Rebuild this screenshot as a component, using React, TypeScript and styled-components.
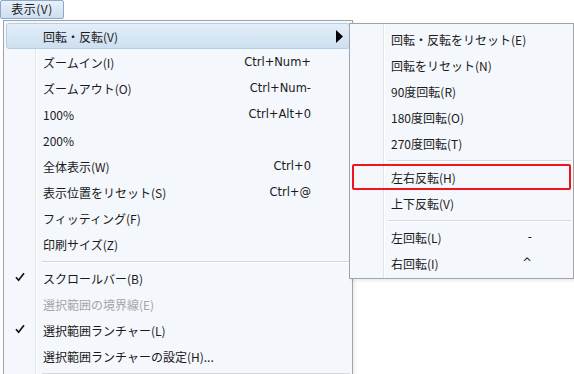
import React, { FC } from 'react';
import styled, { createGlobalStyle, css } from 'styled-components';

const GlobalStyle = createGlobalStyle`
  html, body {
    margin: 0;
    padding: 0;
    background: #ffffff;
    overflow: hidden;
  }
  body {
    font-family: "Noto Sans CJK JP", "Noto Sans", sans-serif;
    font-size: 12px;
    color: #1a1a1a;
  }
`;

const Page = styled.div`
  position: relative;
  width: 574px;
  height: 374px;
`;

const MenuBar = styled.div`
  display: flex;
  height: 19px;
`;

const BarButton = styled.div`
  display: flex;
  align-items: center;
  justify-content: center;
  box-sizing: border-box;
  width: 64px;
  height: 19px;
  padding: 0 0 1px 0;
  border: 1px solid #8ea8c6;
  border-radius: 2px;
  background: linear-gradient(#e7f0f9, #cddff0);
  line-height: 1;
  letter-spacing: 0.5px;
`;

const Menu = styled.div<{ top: number; left: number; width: number; gutter: number; height?: number }>`
  position: absolute;
  top: ${({ top }) => top}px;
  left: ${({ left }) => left}px;
  width: ${({ width }) => width}px;
  ${({ height }) => height && css`height: ${height}px;`}
  box-sizing: border-box;
  padding: 2px 2px;
  border: 1px solid #a3a3a3;
  background: #f4f7fc;
  overflow: hidden;
  display: flex;
  flex-direction: column;
  box-shadow: 2px 2px 3px rgba(0, 0, 0, 0.08);

  &::before {
    content: '';
    position: absolute;
    top: 0;
    bottom: 0;
    left: ${({ gutter }) => gutter}px;
    width: 1px;
    background: #e2e4e8;
    box-shadow: 1px 0 0 #ffffff;
  }
`;

const Item = styled.div<{ hover?: boolean; marked?: boolean; disabled?: boolean; textLeft: number; shortRight: number }>`
  position: relative;
  display: flex;
  align-items: center;
  flex-shrink: 0;
  box-sizing: border-box;
  height: 26px;
  padding: 0 ${({ shortRight }) => shortRight}px 0 ${({ textLeft }) => textLeft}px;
  border: 1px solid transparent;
  border-radius: 3px;
  color: ${({ disabled }) => (disabled ? '#a6a6a6' : '#1a1a1a')};
  white-space: nowrap;
  ${({ hover }) =>
    hover &&
    css`
      border-color: #b5cee8;
      background: linear-gradient(#e4eef8, #cddff0);
    `}
  ${({ marked }) =>
    marked &&
    css`
      border: 2px solid #f0141e;
      border-radius: 2px;
    `}
`;

const Label = styled.span`
  flex: 1;
`;

const Shortcut = styled.span`
  font-family: "DejaVu Sans", "Noto Sans", sans-serif;
  font-size: 11.5px;
`;

const Check = styled.span`
  position: absolute;
  left: 8px;
  top: 6px;
  display: flex;
`;

const Arrow = styled.span`
  position: absolute;
  right: 6px;
  top: 6px;
  display: flex;
`;

const Separator = styled.div<{ left: number }>`
  flex-shrink: 0;
  height: 8px;
  display: flex;
  align-items: center;
  padding-left: ${({ left }) => left}px;
  &::after {
    content: '';
    flex: 1;
    height: 1px;
    background: #d4d6da;
    box-shadow: 0 1px 0 #ffffff;
  }
`;

type Row =
  | { sep: true }
  | { sep?: false; label: string; shortcut?: string; checked?: boolean; disabled?: boolean; sub?: boolean; hover?: boolean; marked?: boolean };

const mainRows: Row[] = [
  { label: '回転・反転(V)', sub: true, hover: true },
  { label: 'ズームイン(I)', shortcut: 'Ctrl+Num+' },
  { label: 'ズームアウト(O)', shortcut: 'Ctrl+Num-' },
  { label: '100%', shortcut: 'Ctrl+Alt+0' },
  { label: '200%' },
  { label: '全体表示(W)', shortcut: 'Ctrl+0' },
  { label: '表示位置をリセット(S)', shortcut: 'Ctrl+@' },
  { label: 'フィッティング(F)' },
  { label: '印刷サイズ(Z)' },
  { sep: true },
  { label: 'スクロールバー(B)', checked: true },
  { label: '選択範囲の境界線(E)', disabled: true },
  { label: '選択範囲ランチャー(L)', checked: true },
  { label: '選択範囲ランチャーの設定(H)...' },
  { sep: true },
];

const subRows: Row[] = [
  { label: '回転・反転をリセット(E)' },
  { label: '回転をリセット(N)' },
  { label: '90度回転(R)' },
  { label: '180度回転(O)' },
  { label: '270度回転(T)' },
  { sep: true },
  { label: '左右反転(H)', marked: true },
  { label: '上下反転(V)' },
  { sep: true },
  { label: '左回転(L)', shortcut: '-' },
  { label: '右回転(I)', shortcut: '^' },
];

const CheckIcon = () => (
  <svg width="10" height="10" viewBox="0 0 10 10">
    <path d="M1 5.2 L3.6 8.2 L9 1.2" fill="none" stroke="#111" strokeWidth="1.7" strokeLinejoin="miter" />
  </svg>
);

const ArrowIcon = () => (
  <svg width="7" height="13" viewBox="0 0 7 13">
    <polygon points="0,0 7,6.5 0,13" fill="#000" />
  </svg>
);

interface MenuProps {
  rows: Row[];
  textLeft: number;
  shortRight: number;
  sepLeft: number;
}

const MenuRows: FC<MenuProps> = ({ rows, textLeft, shortRight, sepLeft }) => (
  <>
    {rows.map((r, i) =>
      r.sep ? (
        <Separator key={i} left={sepLeft} />
      ) : (
        <Item
          key={i}
          hover={r.hover}
          marked={r.marked}
          disabled={r.disabled}
          textLeft={r.marked ? textLeft - 1 : textLeft}
          shortRight={r.marked ? shortRight - 1 : shortRight}
        >
          {r.checked && (
            <Check>
              <CheckIcon />
            </Check>
          )}
          <Label>{r.label}</Label>
          {r.shortcut && <Shortcut>{r.shortcut}</Shortcut>}
          {r.sub && (
            <Arrow>
              <ArrowIcon />
            </Arrow>
          )}
        </Item>
      )
    )}
  </>
);

export default function App() {
  return (
    <Page>
      <GlobalStyle />
      <MenuBar>
        <BarButton>表示(V)</BarButton>
      </MenuBar>
      <Menu top={20} left={3} width={350} gutter={31} height={400}>
        <MenuRows rows={mainRows} textLeft={36} shortRight={38} sepLeft={36} />
      </Menu>
      <Menu top={23} left={349} width={225} gutter={33}>
        <MenuRows rows={subRows} textLeft={38} shortRight={38} sepLeft={36} />
      </Menu>
    </Page>
  );
}
